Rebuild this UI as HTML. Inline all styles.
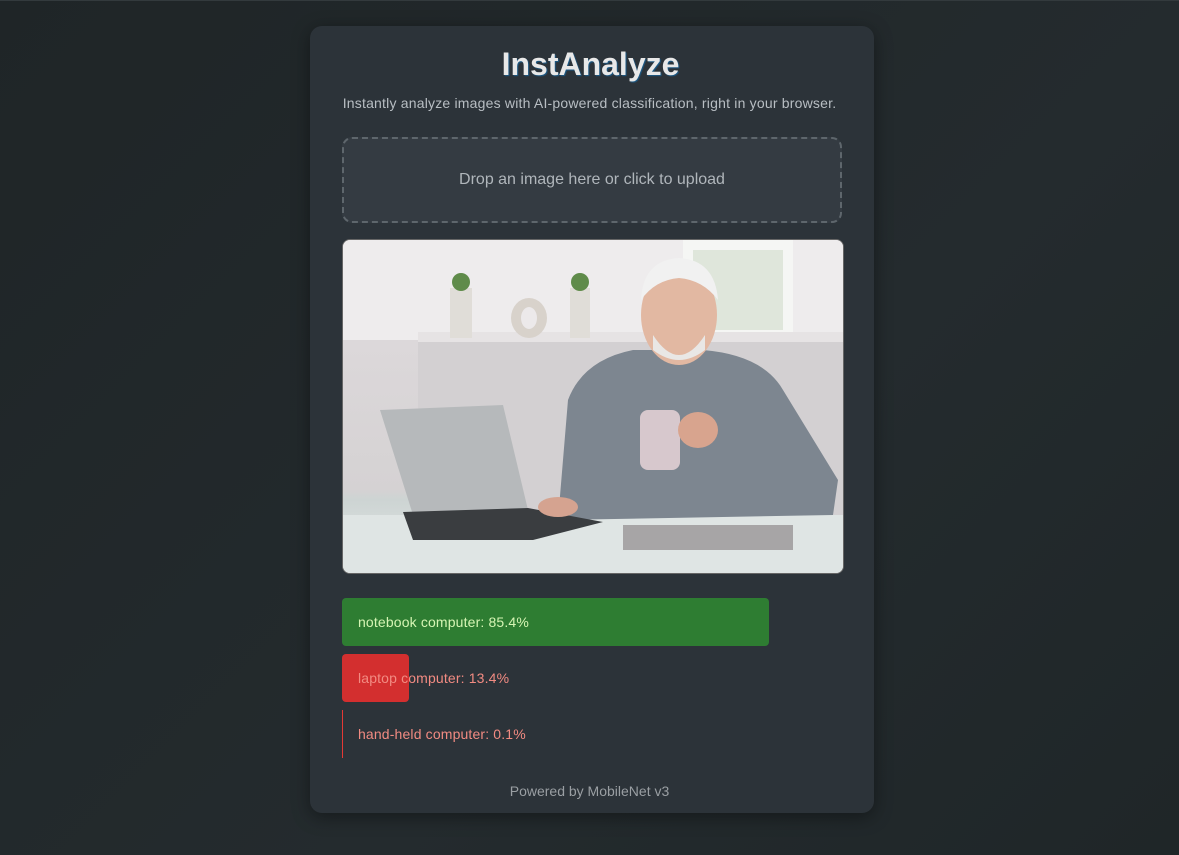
<!DOCTYPE html>
<html><head><style>
body{margin:0;width:1179px;height:855px;background:linear-gradient(135deg,#1f2527,#242b2e 60%,#1f2628);font-family:"Liberation Sans",sans-serif;overflow:hidden;border-top:1px solid #333a3d;box-sizing:border-box}
.card{position:absolute;left:310px;top:26px;width:564px;height:787px;background:#2c3339;border-radius:12px;box-shadow:0 4px 18px rgba(0,0,0,.4)}
h1{position:absolute;top:46px;left:1px;width:100%;text-align:center;margin:0;font-size:32px;color:#e8e8e8;font-weight:bold;text-shadow:1px 1px 1px rgba(0,150,255,.4)}
.sub{position:absolute;top:95px;width:100%;text-align:center;font-size:14px;letter-spacing:0.2px;color:#b8bec3}
.drop{position:absolute;left:342px;top:137px;width:496px;height:82px;border:2px dashed #5e666c;border-radius:10px;background:#343b42;text-align:center;line-height:82px;color:#b0b6bb;font-size:16px}
.img{position:absolute;left:342px;top:239px;width:500px;height:333px;border:1px solid #666;border-radius:8px;overflow:hidden;background:linear-gradient(180deg,#e9e6e8 0%,#dcd8da 30%,#d5d2d3 75%,#cdd4d3 78%,#e2e8e7 100%)}
.bar{position:absolute;left:342px;height:48px;border-radius:4px;line-height:48px;font-size:14px;letter-spacing:0.15px}
.bar span{position:absolute;left:16px;white-space:nowrap}
.foot{position:absolute;top:783px;width:100%;text-align:center;color:#9a9fa3;font-size:14px}
</style></head><body>
<div class="card"></div>
<h1>InstAnalyze</h1>
<div class="sub" style="left:0">Instantly analyze images with AI-powered classification, right in your browser.</div>
<div class="drop">Drop an image here or click to upload</div>
<div class="img">
<svg width="500" height="333" viewBox="0 0 500 333">
<rect x="0" y="0" width="500" height="100" fill="#eeeced"/>
<rect x="340" y="0" width="110" height="95" fill="#f5f6f4"/>
<rect x="350" y="10" width="90" height="80" fill="#dfe6db"/>
<rect x="75" y="92" width="425" height="185" fill="#d3d0d2"/>
<rect x="75" y="92" width="425" height="10" fill="#e6e3e4"/>
<rect x="107" y="48" width="22" height="50" fill="#e0ddd8"/>
<rect x="227" y="48" width="20" height="50" fill="#e0ddd8"/>
<circle cx="118" cy="42" r="9" fill="#5f8b4a"/><circle cx="237" cy="42" r="9" fill="#5f8b4a"/>
<ellipse cx="186" cy="78" rx="18" ry="20" fill="#d8d2cb"/><ellipse cx="186" cy="78" rx="8" ry="11" fill="#ece9ea"/>
<rect x="0" y="275" width="500" height="58" fill="#dfe5e4"/>
<path d="M215 280 L225 160 Q240 120 290 110 L360 110 Q420 115 440 150 L495 240 L490 275 Z" fill="#7d8690"/>
<ellipse cx="336" cy="75" rx="38" ry="50" fill="#e2b8a2"/>
<path d="M298 60 Q300 20 336 18 Q372 20 375 60 Q360 40 336 38 Q312 40 298 60Z" fill="#f1f1f1"/>
<path d="M310 95 Q336 135 362 95 L362 110 Q336 130 310 110Z" fill="#e9e7e5"/>
<rect x="297" y="170" width="40" height="60" rx="8" fill="#d7c8cd"/>
<ellipse cx="355" cy="190" rx="20" ry="18" fill="#d8a48e"/>
<path d="M37 170 L160 165 L185 270 L70 275 Z" fill="#b6b9bb"/>
<path d="M60 272 L185 268 L260 282 L190 300 L70 300 Z" fill="#3a3d40"/>
<ellipse cx="215" cy="267" rx="20" ry="10" fill="#d5a390"/>
<rect x="280" y="285" width="170" height="25" fill="#a7a5a6"/>
</svg>
</div>
<div class="bar" style="top:598px;width:427px;background:#2e7d32;color:#d6f5b4"><span>notebook computer: 85.4%</span></div>
<div class="bar" style="top:654px;width:67px;background:#d32f2f;color:#f28b82"><span>laptop computer: 13.4%</span></div>
<div class="bar" style="top:710px;width:1px;background:#e53935;color:#f28b82;border-radius:0"><span>hand-held computer: 0.1%</span></div>
<div class="foot" style="left:0">Powered by MobileNet v3</div>
</body></html>
